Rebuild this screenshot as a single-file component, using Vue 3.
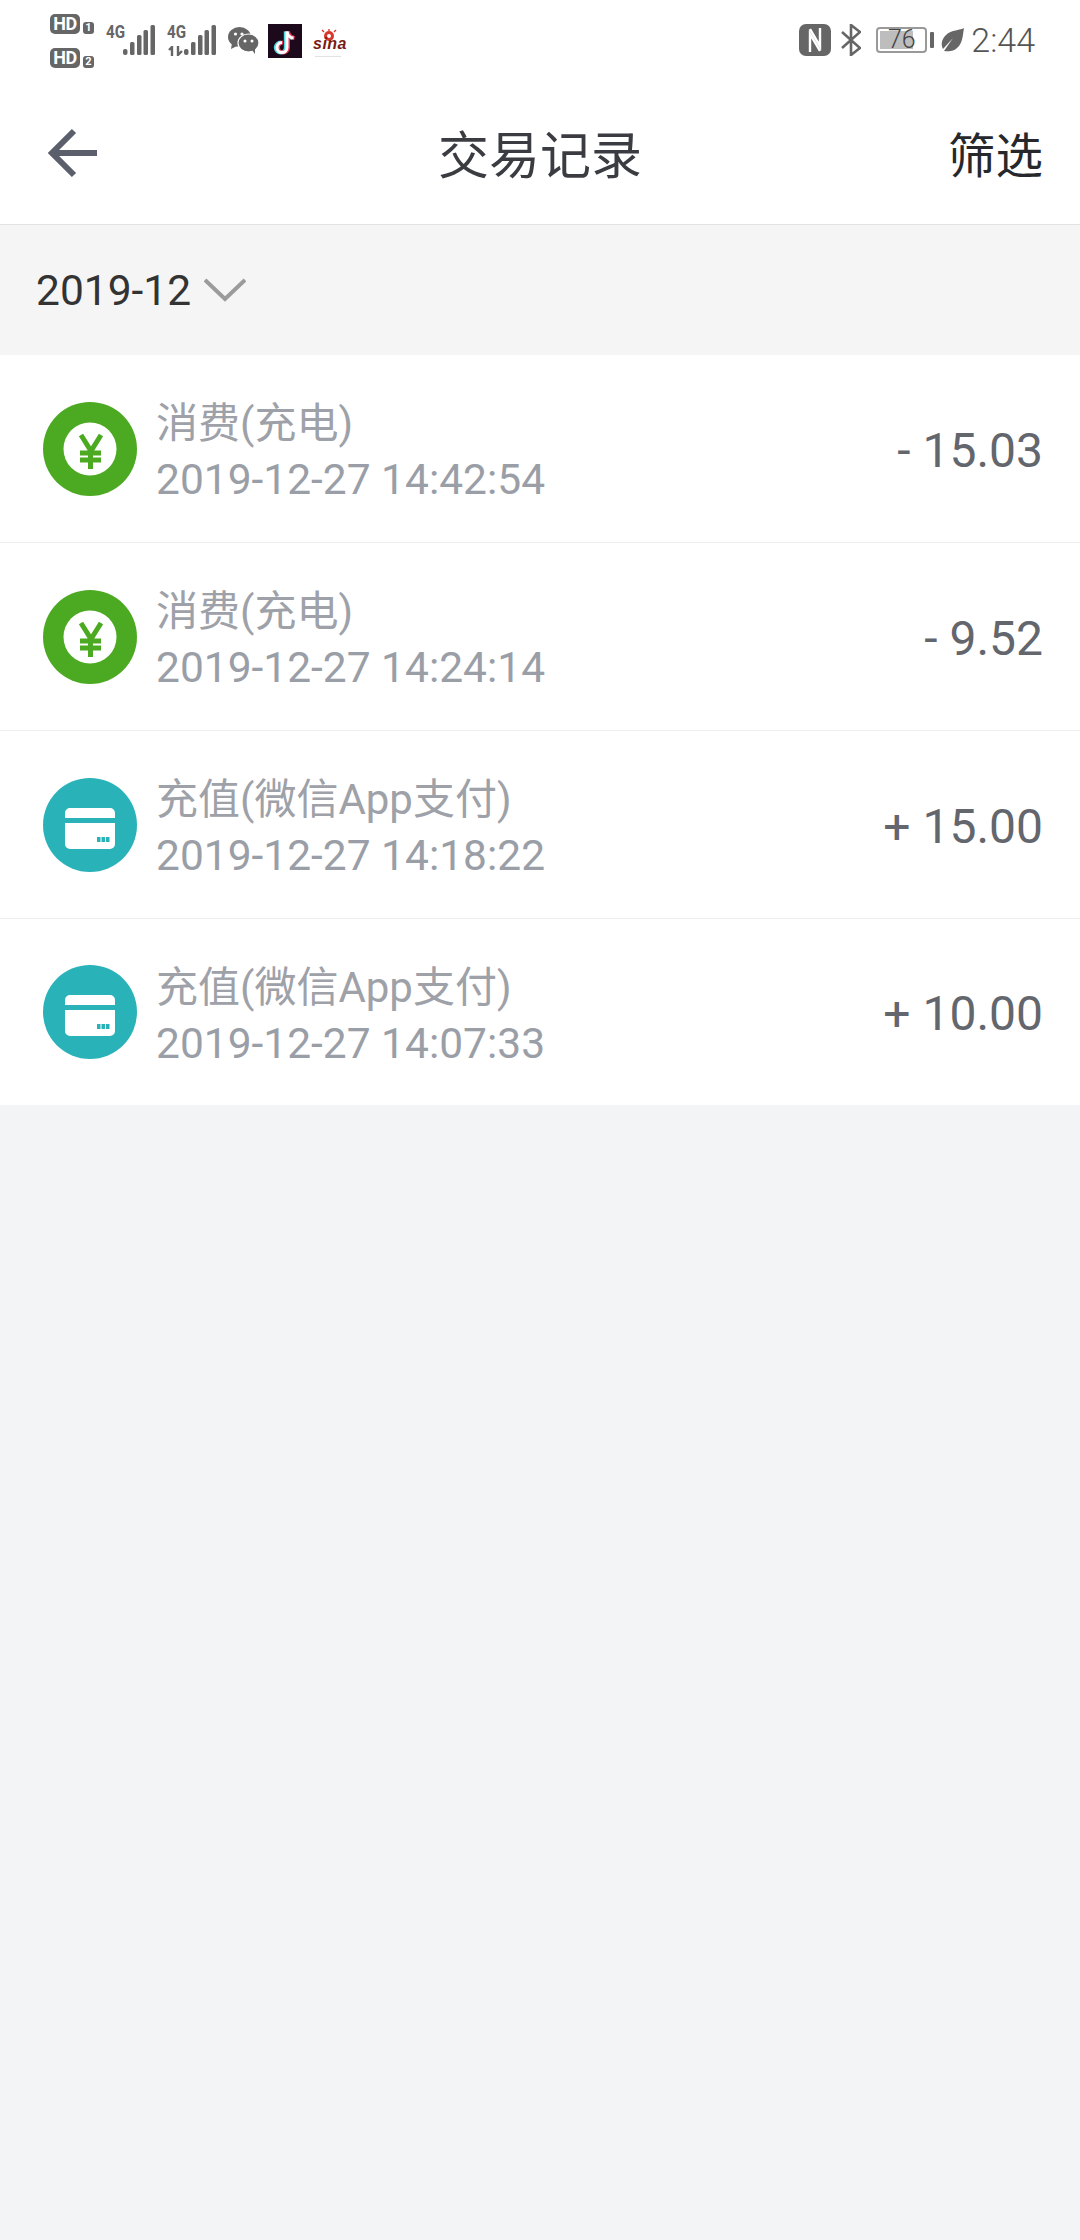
<script setup>
const records = [
  { id: 1, type: 'spend', title: '消费(充电)', time: '2019-12-27 14:42:54', amount: '- 15.03' },
  { id: 2, type: 'spend', title: '消费(充电)', time: '2019-12-27 14:24:14', amount: '- 9.52' },
  { id: 3, type: 'topup', title: '充值(微信App支付)', time: '2019-12-27 14:18:22', amount: '+ 15.00' },
  { id: 4, type: 'topup', title: '充值(微信App支付)', time: '2019-12-27 14:07:33', amount: '+ 10.00' }
]
</script>

<template>
  <div class="page">
    <div class="status">
      <div class="status-left">
        <div class="hd-col">
          <div class="hd-line"><span class="hd">HD</span><span class="sim">1</span></div>
          <div class="hd-line"><span class="hd">HD</span><span class="sim">2</span></div>
        </div>
        <div class="net">
          <span class="net-label">4G</span>
          <svg class="bars" width="32" height="30" viewBox="0 0 32 30" fill="#666">
            <rect x="0" y="24" width="4.500" height="6" rx="2" />
            <rect x="7" y="17" width="4.500" height="13" rx="1.500" />
            <rect x="14" y="10" width="4.500" height="20" rx="1.500" />
            <rect x="20.500" y="5" width="4.500" height="25" rx="1.500" />
            <rect x="27.500" y="0" width="4.500" height="30" rx="1.500" />
          </svg>
        </div>
        <div class="net net-two">
          <span class="net-label">4G</span>
          <svg class="updown" width="16" height="10" viewBox="0 0 16 10" fill="none" stroke="#666" stroke-width="2.400">
            <path d="M4 10V1L1 4M10 0v9l4-4" />
          </svg>
          <svg class="bars" width="32" height="30" viewBox="0 0 32 30" fill="#666">
            <rect x="0" y="24" width="4.500" height="6" rx="2" />
            <rect x="7" y="17" width="4.500" height="13" rx="1.500" />
            <rect x="14" y="10" width="4.500" height="20" rx="1.500" />
            <rect x="20.500" y="5" width="4.500" height="25" rx="1.500" />
            <rect x="27.500" y="0" width="4.500" height="30" rx="1.500" />
          </svg>
        </div>
        <svg class="wechat" width="31" height="27" viewBox="0 0 31 27">
          <ellipse cx="11.500" cy="10" rx="11.500" ry="10" fill="#666" />
          <path d="M4 16l-1 6 6-3z" fill="#666" />
          <ellipse cx="20.500" cy="16" rx="10.500" ry="9" fill="#666" stroke="#fff" stroke-width="1.200" />
          <path d="M24 23l3 4 0-6z" fill="#666" />
          <circle cx="7.500" cy="7" r="1.600" fill="#fff" />
          <circle cx="14" cy="7" r="1.600" fill="#fff" />
          <circle cx="17" cy="14" r="1.500" fill="#fff" />
          <circle cx="24" cy="14" r="1.500" fill="#fff" />
        </svg>
        <div class="tiktok">
          <svg width="34" height="34" viewBox="0 0 34 34" fill="none" stroke-width="4">
            <g stroke="#4fd8de" transform="translate(-1.200 .6)">
              <path d="M19 7v16a5 5 0 1 1-5-5" />
              <path d="M19 7c.5 4 3 6 6.500 6.500" />
            </g>
            <g stroke="#f0365c" transform="translate(1 .6)">
              <path d="M19 7v16a5 5 0 1 1-5-5" />
              <path d="M19 7c.5 4 3 6 6.500 6.500" />
            </g>
            <g stroke="#fff" stroke-width="3" transform="translate(0 .6)">
              <path d="M19 7v16a5 5 0 1 1-5-5" />
              <path d="M19 7c.5 4 3 6 6.500 6.500" />
            </g>
          </svg>
        </div>
        <div class="sina">
          <svg class="sina-eye" width="16" height="12" viewBox="0 0 16 12">
            <circle cx="8" cy="7" r="5" fill="#d8382c" />
            <circle cx="8" cy="7" r="2" fill="#fff" />
            <path d="M3 3L1 1M8 2V0M13 3l2-2" stroke="#d8382c" stroke-width="1.400" />
          </svg>
          <span class="sina-text">sina</span>
          <div class="sina-line"></div>
        </div>
      </div>
      <div class="status-right">
        <svg class="nfc" width="32" height="32" viewBox="0 0 32 32">
          <rect width="32" height="32" rx="7" fill="#666" />
          <path d="M11 28V10L21 27M21 4V22L11 5" stroke="#fff" stroke-width="2.400" fill="none" />
        </svg>
        <svg class="bt" width="20" height="32" viewBox="0 0 20 32" fill="none" stroke="#666" stroke-width="2.600">
          <path d="M1 8l18 16-9 7V1l9 7L1 24" />
        </svg>
        <div class="battery">
          <div class="battery-fill"></div>
          <span class="battery-num">76</span>
        </div>
        <div class="battery-nub"></div>
        <svg class="leaf" width="23" height="24" viewBox="0 0 23 24">
          <path d="M23 0C20 2 10 2 5 7c-5 5-5 10-3 14L12 10 3 23c5 1 11 0 15-5 4-5 4-13 5-18z" fill="#666" />
        </svg>
        <span class="clock">2:44</span>
      </div>
    </div>

    <header class="topbar">
      <svg class="back" width="50" height="50" viewBox="0 0 50 50" fill="none" stroke="#5b5f6b" stroke-width="6">
        <path d="M50 25H6" />
        <path d="M27 3L5 25l22 22" />
      </svg>
      <h1 class="title">交易记录</h1>
      <span class="filter">筛选</span>
    </header>

    <div class="month">
      <span class="month-text">2019-12</span>
      <svg width="42" height="24" viewBox="0 0 42 24" fill="none" stroke="#9b9b9b" stroke-width="4">
        <path d="M1 2l20 19L41 2" />
      </svg>
    </div>

    <ul class="list">
      <li v-for="r in records" :key="r.id" class="row">
        <svg v-if="r.type === 'spend'" class="icon" width="94" height="94" viewBox="0 0 94 94">
          <circle cx="47" cy="47" r="47" fill="#4caa22" />
          <circle cx="47" cy="47" r="26.500" fill="#fff" />
          <path d="M38 33l10 16 10-16M37 51h21M37 58h21M47.500 48v19" fill="none" stroke="#4caa22" stroke-width="5" />
        </svg>
        <svg v-else class="icon" width="94" height="94" viewBox="0 0 94 94">
          <circle cx="47" cy="47" r="47" fill="#29b3b9" />
          <path d="M22 35a5 5 0 0 1 5-5h40a5 5 0 0 1 5 5v5H22zM22 45h50v21a5 5 0 0 1-5 5H27a5 5 0 0 1-5-5z" fill="#fff" />
          <path d="M54 59h3.500v5H54zM58.500 59h3.500v5h-3.500zM63 59h3.500v5H63z" fill="#29b3b9" />
        </svg>
        <div class="info">
          <div class="info-title">{{ r.title }}</div>
          <div class="info-time">{{ r.time }}</div>
        </div>
        <div class="amount">{{ r.amount }}</div>
      </li>
    </ul>
  </div>
</template>

<style>
html, body {
  margin: 0;
  background: #f3f4f6;
}
</style>

<style scoped>
.page {
  height: 2240px;
  background: #f3f4f6;
  font-family: Roboto, "Noto Sans CJK SC", sans-serif;
  overflow: hidden;
}

.status {
  height: 80px;
  background: #fff;
  display: flex;
  justify-content: space-between;
  align-items: center;
  padding: 0 45px 0 50px;
  color: #666;
}

.status-left,
.status-right {
  display: flex;
  align-items: center;
}

.hd-col {
  display: flex;
  flex-direction: column;
  gap: 14px;
  margin-top: 2px;
}

.hd-line {
  display: flex;
  align-items: flex-end;
  gap: 3px;
}

.hd {
  width: 30px;
  height: 20px;
  background: #666;
  color: #fff;
  border-radius: 5px;
  font-size: 18px;
  font-weight: 700;
  line-height: 20px;
  text-align: center;
  letter-spacing: -0.5px;
}

.sim {
  width: 11px;
  height: 12px;
  background: #666;
  color: #fff;
  border-radius: 3px;
  font-size: 11px;
  font-weight: 700;
  line-height: 12px;
  text-align: center;
}

.net {
  position: relative;
  width: 49px;
  height: 30px;
  margin-left: 12px;
  display: flex;
  justify-content: flex-end;
}

.net-two {
  margin-left: 12px;
}

.net-label {
  position: absolute;
  left: 0;
  top: -2px;
  font-size: 19px;
  font-weight: 700;
  line-height: 18px;
  transform: scaleX(0.8);
  transform-origin: left;
}

.updown {
  position: absolute;
  left: 1px;
  top: 21px;
}

.wechat {
  margin-left: 12px;
}

.tiktok {
  width: 34px;
  height: 34px;
  background: #1c0a1c;
  margin-left: 9px;
  margin-top: 2px;
}

.tiktok svg {
  display: block;
}

.sina {
  position: relative;
  width: 32px;
  height: 28px;
  margin-left: 10px;
  margin-top: 6px;
}

.sina-eye {
  position: absolute;
  left: 9px;
  top: 0;
}

.sina-text {
  position: absolute;
  left: 1px;
  top: 6px;
  font-family: "Liberation Sans", sans-serif;
  font-size: 16px;
  font-weight: 700;
  font-style: italic;
  color: #7a1a14;
  letter-spacing: 0.5px;
}

.sina-line {
  position: absolute;
  left: 3px;
  right: 3px;
  bottom: 0;
  height: 1px;
  background: #e2e2e2;
}

.nfc {
  margin-top: -1px;
}

.bt {
  margin-left: 10px;
}

.battery {
  position: relative;
  width: 51px;
  height: 26px;
  margin-left: 15px;
  border: 2px solid #999;
  border-radius: 4px;
  box-sizing: border-box;
  padding: 2px;
}

.battery-fill {
  width: 76%;
  height: 100%;
  background: #bdbdbd;
}

.battery-num {
  position: absolute;
  left: 0;
  right: 0;
  top: -1px;
  text-align: center;
  font-size: 25px;
  font-weight: 300;
  line-height: 24px;
  color: #444;
}

.battery-nub {
  width: 4px;
  height: 16px;
  background: #666;
  border-radius: 1px;
  margin-left: 3px;
}

.leaf {
  margin-left: 7px;
}

.clock {
  margin-left: 7px;
  font-size: 34px;
  font-weight: 300;
  line-height: 40px;
  color: #555;
}

.topbar {
  position: relative;
  height: 144px;
  background: #fff;
  border-bottom: 1px solid #e2e2e2;
  display: flex;
  align-items: center;
  justify-content: space-between;
  padding: 0 37px 0 47px;
}

.back {
  margin-top: 2px;
}

.title {
  position: absolute;
  left: 0;
  right: 0;
  margin: 0;
  text-align: center;
  font-size: 51px;
  font-weight: 400;
  color: #3a3c42;
}

.filter {
  font-size: 47.500px;
  color: #26282c;
}

.month {
  height: 130px;
  background: #f5f5f5;
  display: flex;
  align-items: center;
  gap: 13px;
  padding-left: 36px;
}

.month-text {
  font-size: 42.500px;
  color: #333;
}

.list {
  list-style: none;
  margin: 0;
  padding: 0;
  background: #fff;
}

.row {
  height: 187px;
  border-bottom: 1px solid #eeeeee;
  display: flex;
  align-items: center;
  padding: 0 37px 0 43px;
}

.row:last-child {
  border-bottom: none;
  height: 186px;
}

.row:last-child .info {
  padding-top: 8px;
}

.icon {
  flex: none;
}

.info {
  margin-left: 19px;
  flex: 1;
  padding-top: 6px;
}

.info-title {
  font-size: 42px;
  line-height: 56px;
  color: #9ea1a8;
}

.info-time {
  font-size: 42.500px;
  line-height: 56px;
  color: #9a9ea6;
}

.amount {
  font-size: 48px;
  color: #63666d;
  padding-top: 3px;
}
</style>
